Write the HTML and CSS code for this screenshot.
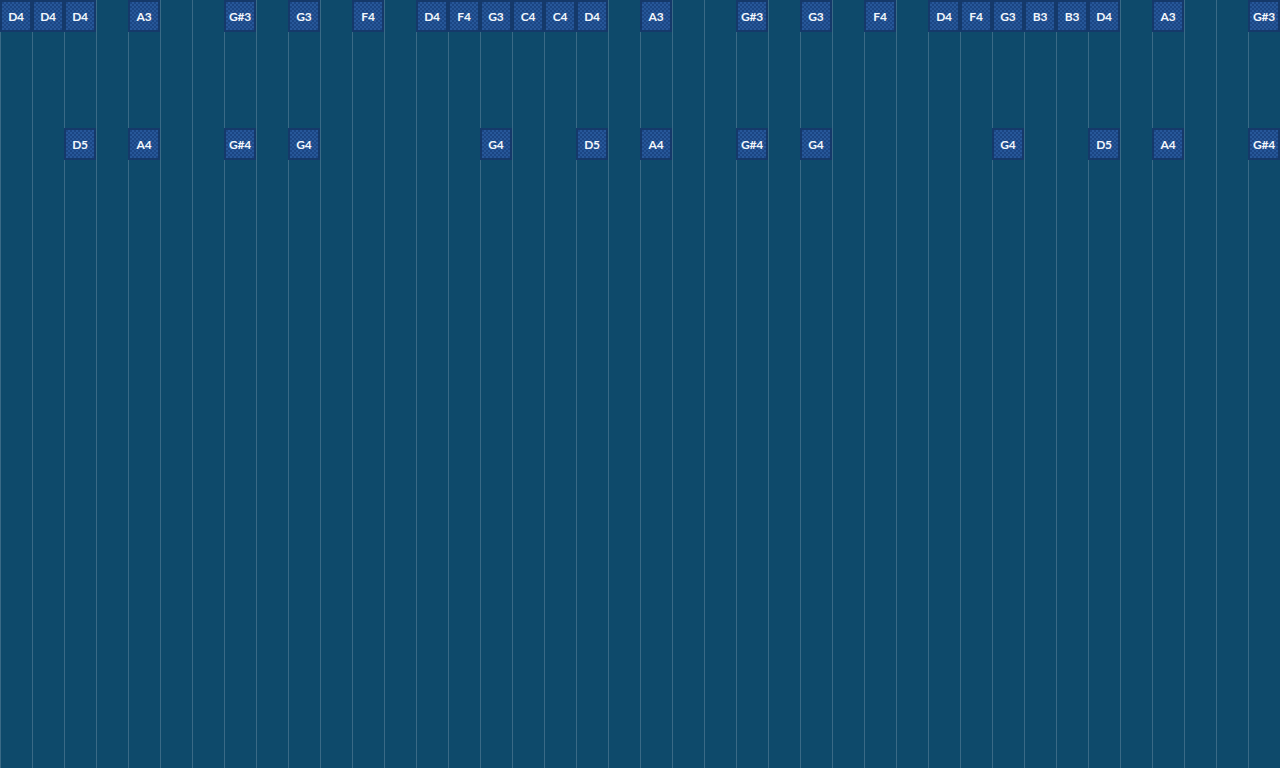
FILE: index.html
```html
<!DOCTYPE html>
<html lang="en">
<head>
  <meta charset="UTF-8" />
  <title>Note Roll</title>
  <link rel="stylesheet" href="styles.css">
</head>
<body>
  <main class="roll">
    <div class="lanes">
      <span></span><span></span><span></span><span></span><span></span><span></span><span></span><span></span><span></span><span></span>
      <span></span><span></span><span></span><span></span><span></span><span></span><span></span><span></span><span></span><span></span>
      <span></span><span></span><span></span><span></span><span></span><span></span><span></span><span></span><span></span><span></span>
      <span></span><span></span><span></span><span></span><span></span><span></span><span></span><span></span><span></span><span></span>
    </div>
    <div class="notes">
      <!-- top row -->
      <div class="note" style="grid-column:1;grid-row:1">D4</div>
      <div class="note" style="grid-column:2;grid-row:1">D4</div>
      <div class="note" style="grid-column:3;grid-row:1">D4</div>
      <div class="note" style="grid-column:5;grid-row:1">A3</div>
      <div class="note" style="grid-column:8;grid-row:1">G#3</div>
      <div class="note" style="grid-column:10;grid-row:1">G3</div>
      <div class="note" style="grid-column:12;grid-row:1">F4</div>
      <div class="note" style="grid-column:14;grid-row:1">D4</div>
      <div class="note" style="grid-column:15;grid-row:1">F4</div>
      <div class="note" style="grid-column:16;grid-row:1">G3</div>
      <div class="note" style="grid-column:17;grid-row:1">C4</div>
      <div class="note" style="grid-column:18;grid-row:1">C4</div>
      <div class="note" style="grid-column:19;grid-row:1">D4</div>
      <div class="note" style="grid-column:21;grid-row:1">A3</div>
      <div class="note" style="grid-column:24;grid-row:1">G#3</div>
      <div class="note" style="grid-column:26;grid-row:1">G3</div>
      <div class="note" style="grid-column:28;grid-row:1">F4</div>
      <div class="note" style="grid-column:30;grid-row:1">D4</div>
      <div class="note" style="grid-column:31;grid-row:1">F4</div>
      <div class="note" style="grid-column:32;grid-row:1">G3</div>
      <div class="note" style="grid-column:33;grid-row:1">B3</div>
      <div class="note" style="grid-column:34;grid-row:1">B3</div>
      <div class="note" style="grid-column:35;grid-row:1">D4</div>
      <div class="note" style="grid-column:37;grid-row:1">A3</div>
      <div class="note" style="grid-column:40;grid-row:1">G#3</div>
      <!-- second row -->
      <div class="note" style="grid-column:3;grid-row:5">D5</div>
      <div class="note" style="grid-column:5;grid-row:5">A4</div>
      <div class="note" style="grid-column:8;grid-row:5">G#4</div>
      <div class="note" style="grid-column:10;grid-row:5">G4</div>
      <div class="note" style="grid-column:16;grid-row:5">G4</div>
      <div class="note" style="grid-column:19;grid-row:5">D5</div>
      <div class="note" style="grid-column:21;grid-row:5">A4</div>
      <div class="note" style="grid-column:24;grid-row:5">G#4</div>
      <div class="note" style="grid-column:26;grid-row:5">G4</div>
      <div class="note" style="grid-column:32;grid-row:5">G4</div>
      <div class="note" style="grid-column:35;grid-row:5">D5</div>
      <div class="note" style="grid-column:37;grid-row:5">A4</div>
      <div class="note" style="grid-column:40;grid-row:5">G#4</div>
    </div>
  </main>
</body>
</html>
```

FILE: styles.css
```css
*, *::before, *::after {
  box-sizing: border-box;
}

body {
  margin: 0;
  padding: 0;
  background-color: #0e4a6b;
  font-family: 'Lato', 'Liberation Sans', sans-serif;
  overflow: hidden;
}

.roll {
  position: relative;
  width: 1280px;
  height: 768px;
}

/* Lane separators */
.lanes {
  display: grid;
  grid-template-columns: repeat(40, 32px);
  height: 100%;
}

.lanes span {
  border-left: 1px solid #3a6a86;
}

/* Note tiles sit over the lanes */
.notes {
  position: absolute;
  inset: 0;
  display: grid;
  grid-template-columns: repeat(40, 32px);
  grid-template-rows: repeat(24, 32px);
}

.note {
  width: 32px;
  height: 32px;
  border: 2px solid #15396a;
  background-color: #1b4684;
  background-image:
    linear-gradient(45deg, #275799 25%, transparent 25%, transparent 75%, #275799 75%),
    linear-gradient(45deg, #275799 25%, transparent 25%, transparent 75%, #275799 75%);
  background-size: 4px 4px;
  background-position: 0 0, 2px 2px;
  color: #f4f7fb;
  font-size: 12px;
  font-weight: 700;
  display: flex;
  align-items: center;
  justify-content: center;
  letter-spacing: -0.2px;
  user-select: none;
}
```
